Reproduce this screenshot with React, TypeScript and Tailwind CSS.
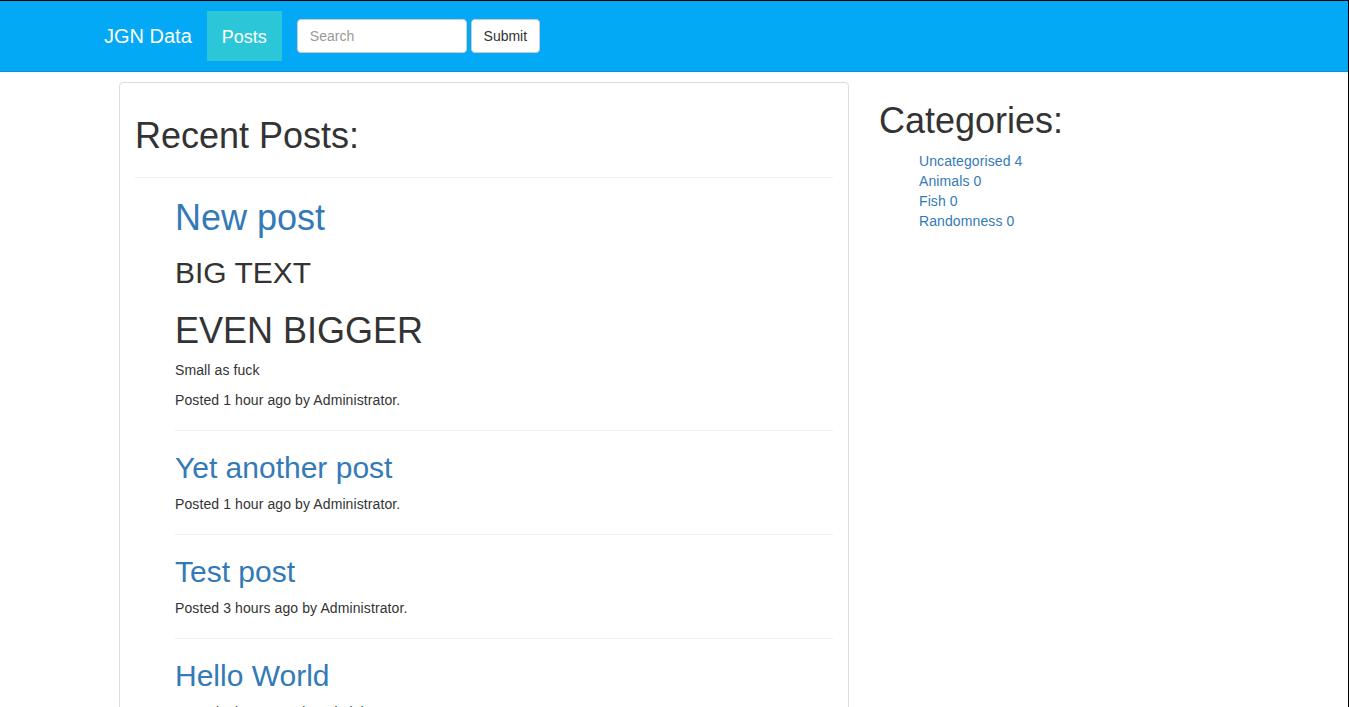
const posts = [
  { title: "Yet another post", posted: "Posted 1 hour ago by Administrator." },
  { title: "Test post", posted: "Posted 3 hours ago by Administrator." },
  { title: "Hello World", posted: "Posted 5 hours ago by Administrator." },
];

const categories = [
  { name: "Uncategorised", count: 4 },
  { name: "Animals", count: 0 },
  { name: "Fish", count: 0 },
  { name: "Randomness", count: 0 },
];

function Navbar() {
  return (
    <nav className="h-[71px] bg-[#03a9f4] border-b border-[#0a93d6] flex items-center pl-[89px]">
      <a className="px-[15px] text-[20px] leading-[20px] text-white">JGN Data</a>
      <a className="h-[50px] flex items-center px-[15px] pt-[1px] bg-[#2cc6d9] text-[18px] text-white">Posts</a>
      <form className="flex items-center ml-[15px]" onSubmit={(e) => e.preventDefault()}>
        <input
          placeholder="Search"
          className="w-[170px] h-[34px] px-[12px] bg-white border border-[#ccc] rounded-[4px] text-[14px] text-[#555] placeholder:text-[#999] outline-none"
        />
        <button className="ml-[4px] w-[69px] h-[34px] bg-white border border-[#ccc] rounded-[4px] text-[14px] text-[#333]">
          Submit
        </button>
      </form>
    </nav>
  );
}

function PostList() {
  return (
    <ul className="pl-[40px] mt-[20px]">
      <li>
        <h1 className="text-[36px] leading-[1.1] text-[#337ab7]">New post</h1>
        <h2 className="mt-[19px] text-[30px] leading-[1.1]">BIG TEXT</h2>
        <h1 className="mt-[22px] text-[36px] leading-[1.1]">EVEN BIGGER</h1>
        <p className="mt-[9px] tracking-[0.1px]">Small as fuck</p>
        <p className="mt-[10px] tracking-[0.1px]">Posted 1 hour ago by Administrator.</p>
        <hr className="mt-[20px] border-[#eee]" />
      </li>
      {posts.map((post) => (
        <li key={post.title}>
          <h2 className="mt-[20px] text-[30px] leading-[1.1] text-[#337ab7]">{post.title}</h2>
          <p className="mt-[10px] tracking-[0.1px]">{post.posted}</p>
          <hr className="mt-[20px] border-[#eee]" />
        </li>
      ))}
    </ul>
  );
}

export default function App() {
  return (
    <div className="h-[707px] overflow-hidden bg-white border-t border-r border-black font-['Liberation_Sans',Arial,sans-serif] text-[14px] leading-[20px] text-[#333]">
      <Navbar />
      <main className="flex items-start pl-[119px] mt-[10px]">
        <section className="w-[730px] shrink-0 border border-[#ddd] rounded-[4px] p-[15px] pb-[200px]">
          <h1 className="mt-[18px] pb-[21px] border-b border-[#eee] text-[36px] leading-[1.1]">Recent Posts:</h1>
          <PostList />
        </section>
        <aside className="ml-[30px] w-[300px]">
          <h1 className="mt-[19px] text-[36px] leading-[1.1]">Categories:</h1>
          <ul className="pl-[40px] mt-[10px]">
            {categories.map((c) => (
              <li key={c.name}>
                <a className="text-[#337ab7] tracking-[0.1px]">
                  {c.name} {c.count}
                </a>
              </li>
            ))}
          </ul>
        </aside>
      </main>
    </div>
  );
}
